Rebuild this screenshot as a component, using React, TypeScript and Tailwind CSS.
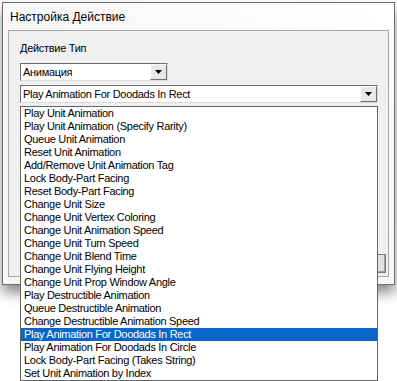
const items = [
  "Play Unit Animation",
  "Play Unit Animation (Specify Rarity)",
  "Queue Unit Animation",
  "Reset Unit Animation",
  "Add/Remove Unit Animation Tag",
  "Lock Body-Part Facing",
  "Reset Body-Part Facing",
  "Change Unit Size",
  "Change Unit Vertex Coloring",
  "Change Unit Animation Speed",
  "Change Unit Turn Speed",
  "Change Unit Blend Time",
  "Change Unit Flying Height",
  "Change Unit Prop Window Angle",
  "Play Destructible Animation",
  "Queue Destructible Animation",
  "Change Destructible Animation Speed",
  "Play Animation For Doodads In Rect",
  "Play Animation For Doodads In Circle",
  "Lock Body-Part Facing (Takes String)",
  "Set Unit Animation by Index",
];

const selected = "Play Animation For Doodads In Rect";

const Arrow = () => (
  <div className="w-[17px] h-full flex items-center justify-center bg-[#e8e8e8] border border-t-white border-l-white border-r-[#707070] border-b-[#707070]">
    <svg width="7" height="4" viewBox="0 0 7 4">
      <path d="M0 0h7L3.5 4z" fill="#000" />
    </svg>
  </div>
);

const Combo = ({ text, width }: { text: string; width: string }) => (
  <div className={`${width} h-[18px] flex items-stretch bg-white border border-t-[#6d6d6d] border-l-[#6d6d6d] border-r-[#d9d9d9] border-b-[#d9d9d9]`}>
    <div className="flex-1 pl-[2px] text-[11px] leading-[16px] tracking-[-0.3px] text-black">{text}</div>
    <Arrow />
  </div>
);

export default function App() {
  return (
    <div
      className="relative w-[397px] h-[381px] bg-white overflow-hidden"
      style={{ fontFamily: '"Liberation Sans", Arial, sans-serif' }}
    >
      <div className="pt-[2px] pl-[2px]">
        <div className="w-[393px] h-[283px] flex flex-col border border-[#6f6f6f] bg-gradient-to-bl from-white via-[#f7f7f7] to-[#f7f7f7] shadow-[0_8px_12px_rgba(0,0,0,0.45)]">
          <div className="h-[27px] pl-[7px] pt-[6px] text-[12px] leading-[16px] text-black">
            Настройка Действие
          </div>
          <div className="ml-[5px] w-[381px] h-[247px] flex flex-col border border-[#a8a8a8] bg-[#f0f0f0] pl-[11px]">
            <div className="pt-[11px] text-[11px] leading-[13px] tracking-[-0.3px] text-black">Действие Тип</div>
            <div className="mt-[8px]">
              <Combo text="Анимация" width="w-[148px]" />
            </div>
            <div className="mt-[4px]">
              <Combo text={selected} width="w-[358px]" />
            </div>
            <div className="flex-1" />
            <div className="flex justify-end pr-[2px] pb-[3px]">
              <div className="w-[75px] h-[19px] bg-[#e1e1e1] border border-[#7a7a7a] shadow-[inset_-1px_-1px_0_#a0a0a0]" />
            </div>
          </div>
        </div>
      </div>

      <div className="absolute left-[20px] top-[106px] w-[358px] h-[275px] bg-white border border-[#646464]">
        {items.map((item) => (
          <div
            key={item}
            className={`h-[13px] pl-[3px] text-[11px] leading-[13px] tracking-[-0.3px] whitespace-nowrap ${
              item === selected ? "bg-[#0766c8] text-white" : "text-black"
            }`}
          >
            {item}
          </div>
        ))}
      </div>
    </div>
  );
}
